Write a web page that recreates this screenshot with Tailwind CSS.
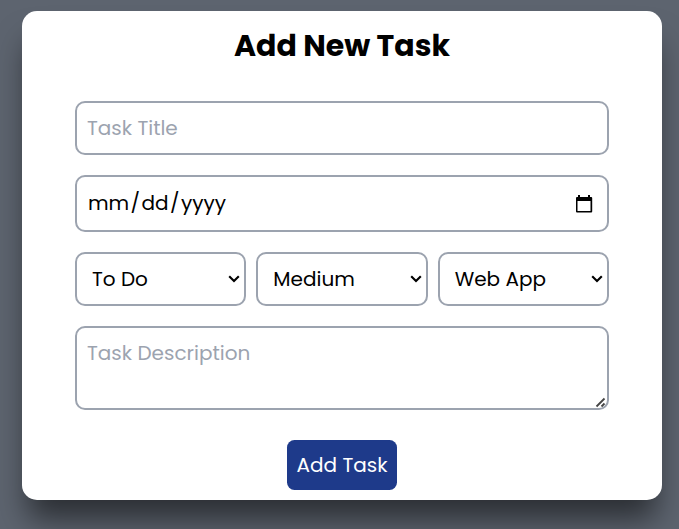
<!DOCTYPE html>
<html lang="en">
<head>
<meta charset="utf-8">
<title>Add New Task</title>
<script src="https://cdn.jsdelivr.net/npm/@tailwindcss/browser@4"></script>
</head>
<body class="h-[529px] overflow-hidden bg-[#5d646f] pl-[22px] pt-[11px] font-[Poppins,Inter,sans-serif] text-[20px] text-black">
<main class="flex h-[489px] w-[640px] flex-col items-center rounded-[15px] bg-white px-[53px] pt-[16px] shadow-[0_25px_31px_-6px_rgba(0,0,0,0.54)]">
  <h1 class="h-[38px] whitespace-nowrap text-[30px] leading-[38px] font-bold">Add New Task</h1>
  <form class="mt-[36px] flex w-full flex-col gap-[20px]">
    <input type="text" placeholder="Task Title" class="h-[54px] w-full rounded-[10px] border-2 border-[#9ca3af] px-[10px] placeholder:text-[#9ca3af]">
    <div class="flex h-[57px] items-center justify-between rounded-[10px] border-2 border-[#9ca3af] pr-[14px] pl-[11px]">
      <span class="pb-[2px]">mm<span class="mx-[1.4px]">/</span>dd<span class="mx-[1.4px]">/</span>yyyy</span>
      <svg class="h-[20px] w-[18px]" viewBox="0 0 18 20"><path fill="#000" fill-rule="evenodd" d="M3 1h2v2h8V1h2v2h1.200a1 1 0 0 1 1 1v13.500a1 1 0 0 1-1 1H2a1 1 0 0 1-1-1V4a1 1 0 0 1 1-1h1zM2.500 7v10h13V7z"/></svg>
    </div>
    <div class="grid h-[54px] grid-cols-3 gap-[10px]">
      <div class="flex items-center justify-between rounded-[10px] border-2 border-[#9ca3af] pr-[4px] pl-[15px]"><span>To Do</span><svg class="h-[8px] w-[12px]" viewBox="0 0 12 8"><path d="M1.200 1.200 6 6l4.800-4.800" fill="none" stroke="#000" stroke-width="2.100"/></svg></div>
      <div class="flex items-center justify-between rounded-[10px] border-2 border-[#9ca3af] pr-[4px] pl-[15px]"><span>Medium</span><svg class="h-[8px] w-[12px]" viewBox="0 0 12 8"><path d="M1.200 1.200 6 6l4.800-4.800" fill="none" stroke="#000" stroke-width="2.100"/></svg></div>
      <div class="flex items-center justify-between rounded-[10px] border-2 border-[#9ca3af] pr-[4px] pl-[15px]"><span>Web App</span><svg class="h-[8px] w-[12px]" viewBox="0 0 12 8"><path d="M1.200 1.200 6 6l4.800-4.800" fill="none" stroke="#000" stroke-width="2.100"/></svg></div>
    </div>
    <div class="relative h-[84px]">
      <textarea placeholder="Task Description" class="block h-full w-full resize-none rounded-[10px] border-2 border-[#9ca3af] px-[10px] py-[10px] leading-[30px] placeholder:text-[#9ca3af]"></textarea>
      <svg class="absolute right-[3px] bottom-[2px] h-[11px] w-[11px]" viewBox="0 0 11 11"><path d="M1.500 9.500 9.500 1.500M6.500 9.500l3-3" fill="none" stroke="#444" stroke-width="1.800"/></svg>
    </div>
  </form>
  <button class="mt-[30px] h-[50px] w-[110px] rounded-[7.5px] bg-[#1e3a8a] whitespace-nowrap text-white">Add Task</button>
</main>
</body>
</html>
